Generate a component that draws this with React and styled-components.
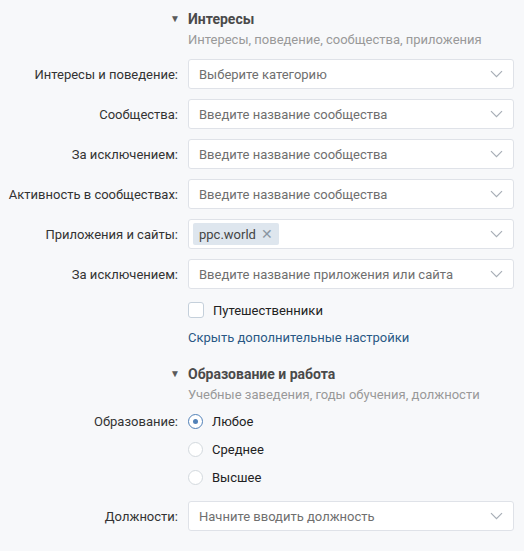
import React from 'react';
import styled, { createGlobalStyle } from 'styled-components';

const GlobalStyle = createGlobalStyle`
  body {
    margin: 0;
    background-color: #f7f8fa;
    font-family: Roboto, "Open Sans", sans-serif;
    font-size: 13px;
    color: #000;
  }
`;

const Page = styled.div`
  width: 524px;
  padding-top: 10px;
  padding-bottom: 20px;
`;

const Section = styled.div`
  display: grid;
  grid-template-columns: 178px 326px;
  column-gap: 10px;
  align-items: center;
`;

const Header = styled.div`
  grid-column: 2;
  position: relative;
  font-size: 14px;
  font-weight: 700;
  color: #4a4a4a;
  line-height: 18px;
  height: 18px;
`;

const Arrow = styled.span`
  position: absolute;
  left: -18px;
  top: 0;
  font-size: 10px;
  color: #5a5a5a;
  line-height: 18px;
`;

const Sub = styled.div`
  grid-column: 2;
  color: #999;
  line-height: 18px;
  margin-top: 3px;
  margin-bottom: ${(p) => p.$bottom ?? 10}px;
`;

const Label = styled.div`
  grid-column: 1;
  text-align: right;
  color: #333;
  white-space: nowrap;
  margin-top: ${(p) => p.$top ?? 0}px;
  margin-bottom: ${(p) => p.$bottom ?? 10}px;
`;

const Field = styled.div`
  grid-column: 2;
  height: 28px;
  box-sizing: content-box;
  background: #fff;
  border: 1px solid #dfe2e8;
  border-radius: 3px;
  display: flex;
  align-items: center;
  padding-left: 10px;
  padding-right: 10px;
  margin-top: ${(p) => p.$top ?? 0}px;
  margin-bottom: ${(p) => p.$bottom ?? 10}px;
`;

const Placeholder = styled.span`
  flex: 1;
  color: #6f6f6f;
`;

const Chevron = () => (
  <svg width="13" height="8" viewBox="0 0 13 8" fill="none">
    <path d="M1 1.2l5.5 5.5L12 1.2" stroke="#a7aeb6" strokeWidth="1.2" />
  </svg>
);

const Tag = styled.span`
  display: inline-flex;
  align-items: center;
  gap: 5px;
  background: #dee6ee;
  color: #444;
  border-radius: 2px;
  height: 22px;
  padding: 0 6px;
  margin-left: -6px;
`;

const TagX = styled.span`
  color: #8a96a3;
  font-size: 14px;
`;

const Spacer = styled.span`
  flex: 1;
`;

const CheckRow = styled.label`
  grid-column: 2;
  display: flex;
  align-items: center;
  gap: 9px;
  height: 18px;
  margin-top: 2px;
  color: #222;
`;

const Box = styled.span`
  width: 14px;
  height: 14px;
  border: 1px solid #c5d0db;
  border-radius: 3px;
  background: #fff;
`;

const Link = styled.a`
  grid-column: 2;
  color: #2a5885;
  text-decoration: none;
  line-height: 18px;
  margin-top: 10px;
  margin-bottom: 18px;
`;

const RadioRow = styled.label`
  grid-column: 2;
  display: flex;
  align-items: center;
  gap: 9px;
  height: 18px;
  margin-bottom: 10px;
  color: #222;
`;

const Circle = styled.span`
  width: 13px;
  height: 13px;
  border-radius: 50%;
  border: 1px solid ${(p) => (p.$on ? '#5181b8' : '#d3d9de')};
  background: #fff;
  display: flex;
  align-items: center;
  justify-content: center;
  &::after {
    content: '';
    width: 5px;
    height: 5px;
    border-radius: 50%;
    background: ${(p) => (p.$on ? '#5181b8' : 'transparent')};
  }
`;

const Select = ({ text, top, bottom }) => (
  <Field $top={top} $bottom={bottom}>
    <Placeholder>{text}</Placeholder>
    <Chevron />
  </Field>
);

const communities = [
  ['Сообщества:', 'Введите название сообщества'],
  ['За исключением:', 'Введите название сообщества'],
  ['Активность в сообществах:', 'Введите название сообщества'],
];

export default function App() {
  return (
    <Page>
      <GlobalStyle />
      <Section>
        <Header>
          <Arrow>▼</Arrow>Интересы
        </Header>
        <Sub>Интересы, поведение, сообщества, приложения</Sub>

        <Label>Интересы и поведение:</Label>
        <Select text="Выберите категорию" />

        {communities.map(([label, text], i) => (
          <React.Fragment key={i}>
            <Label>{label}</Label>
            <Select text={text} />
          </React.Fragment>
        ))}

        <Label>Приложения и сайты:</Label>
        <Field>
          <Tag>
            ppc.world<TagX>✕</TagX>
          </Tag>
          <Spacer />
          <Chevron />
        </Field>

        <Label>За исключением:</Label>
        <Select text="Введите название приложения или сайта" />

        <CheckRow>
          <Box />
          Путешественники
        </CheckRow>
        <Link href="#">Скрыть дополнительные настройки</Link>

        <Header>
          <Arrow>▼</Arrow>Образование и работа
        </Header>
        <Sub $bottom={8}>Учебные заведения, годы обучения, должности</Sub>

        <Label>Образование:</Label>
        <RadioRow>
          <Circle $on />
          Любое
        </RadioRow>
        <RadioRow>
          <Circle />
          Среднее
        </RadioRow>
        <RadioRow>
          <Circle />
          Высшее
        </RadioRow>

        <Label $top={5} $bottom={0}>Должности:</Label>
        <Select text="Начните вводить должность" top={5} bottom={0} />
      </Section>
    </Page>
  );
}
